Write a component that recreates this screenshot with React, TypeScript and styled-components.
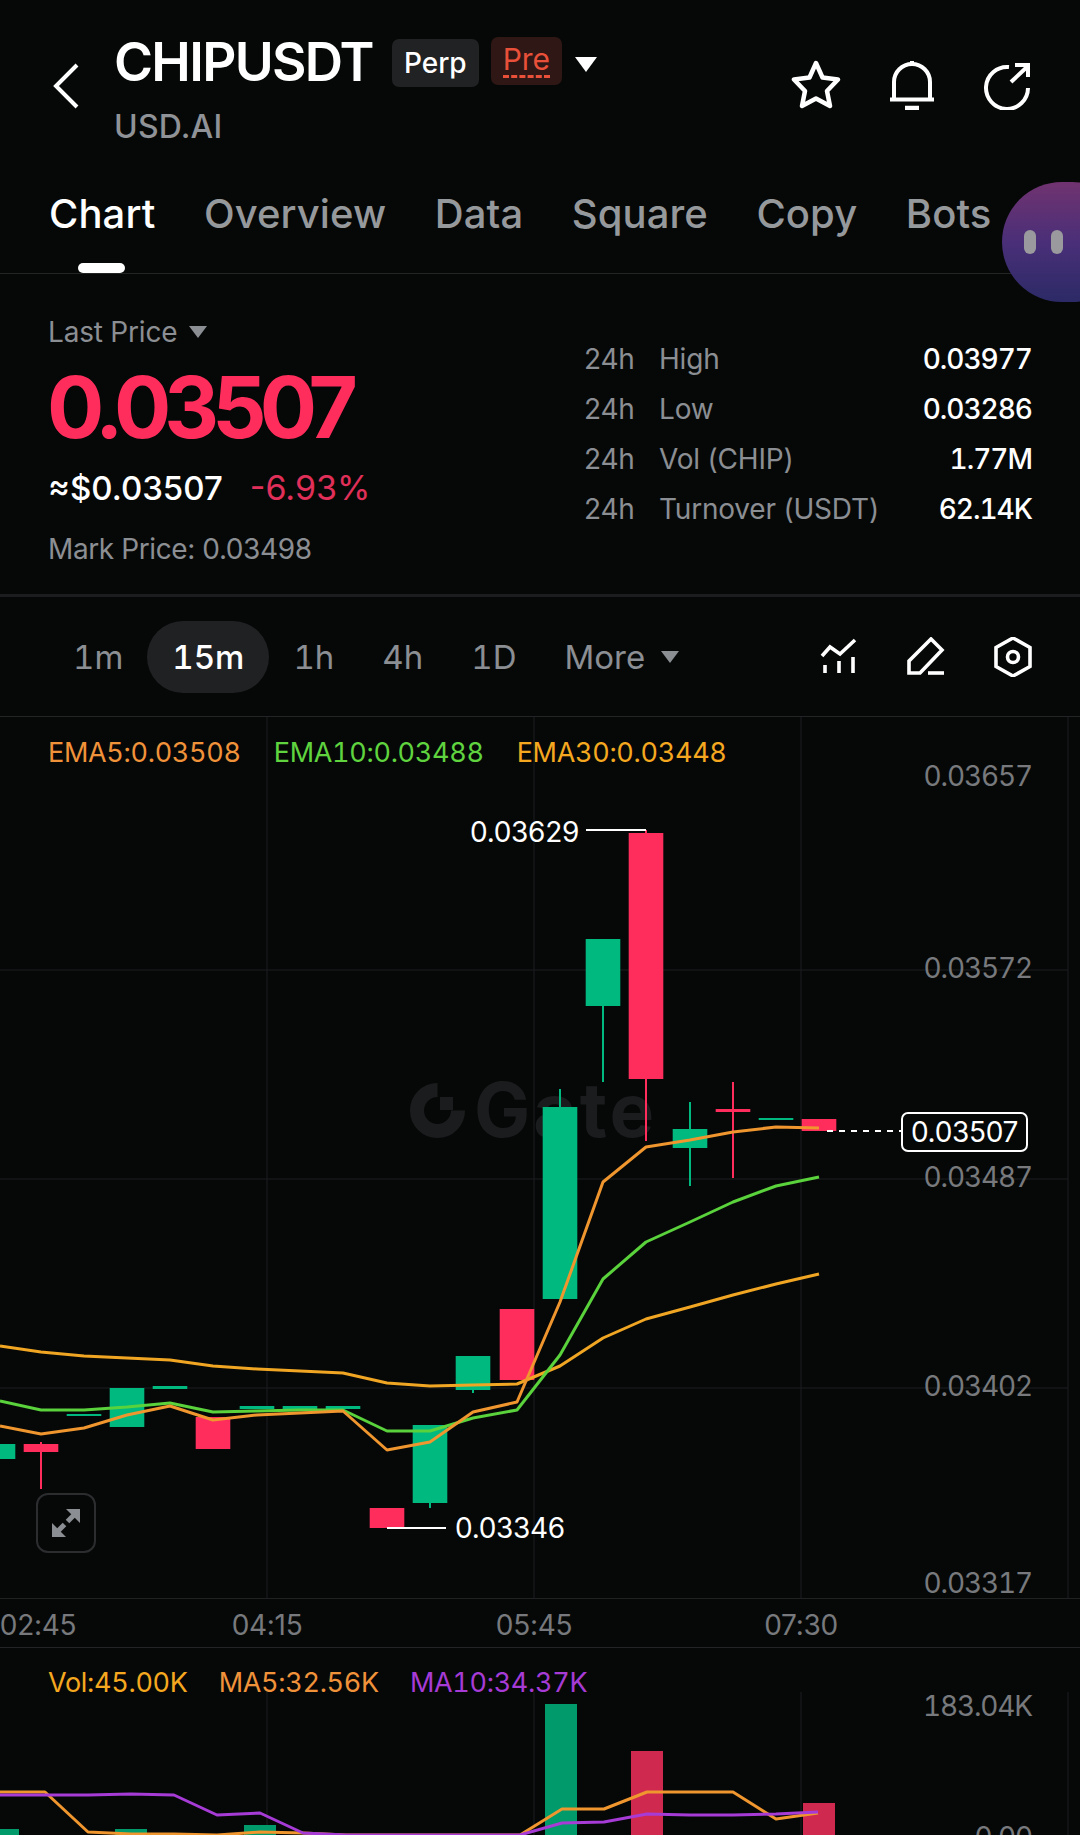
import React from 'react';
import styled, { createGlobalStyle } from 'styled-components';

const GlobalStyle = createGlobalStyle`
  html, body {
    margin: 0;
    padding: 0;
    background: #060808;
  }
  * {
    box-sizing: border-box;
  }
`;

const Page = styled.div`
  position: relative;
  width: 1080px;
  height: 1835px;
  overflow: hidden;
  background: #060808;
  color: #fff;
  font-family: Inter, 'Liberation Sans', sans-serif;
`;

const Header = styled.header`
  display: flex;
  align-items: flex-start;
  height: 150px;
  padding: 32px 47px 0 53px;
`;

const BackButton = styled.svg`
  width: 26px;
  height: 46px;
  margin-top: 31px;
  margin-right: 35px;
  flex: none;
`;

const TitleBlock = styled.div`
  flex: 1;
`;

const TitleRow = styled.div`
  display: flex;
  align-items: flex-start;
`;

const Title = styled.h1`
  margin: 2px 0 0;
  font-size: 53px;
  line-height: 56px;
  font-weight: 600;
  letter-spacing: -1.7px;
`;

const Badge = styled.span<{ $pre?: boolean }>`
  display: flex;
  align-items: center;
  justify-content: center;
  height: 48px;
  margin-top: ${({ $pre }) => ($pre ? '5px' : '7px')};
  margin-left: ${({ $pre }) => ($pre ? '12px' : '19px')};
  padding: 0 12px;
  border-radius: 7px;
  font-size: 28px;
  font-weight: ${({ $pre }) => ($pre ? 400 : 500)};
  background: ${({ $pre }) => ($pre ? '#2e1714' : '#202223')};
  color: ${({ $pre }) => ($pre ? '#e8503a' : '#fff')};
`;

const PreText = styled.span`
  padding-bottom: 1px;
  border-bottom: 3px dashed #e8503a;
  font-size: 30px;
  line-height: 30px;
`;

const Caret = styled.i<{ $size: number; $color: string }>`
  display: inline-block;
  flex: none;
  width: 0;
  height: 0;
  border-left: ${({ $size }) => $size}px solid transparent;
  border-right: ${({ $size }) => $size}px solid transparent;
  border-top: ${({ $size }) => $size * 1.4}px solid ${({ $color }) => $color};
`;

const TitleCaret = styled(Caret)`
  margin: 25px 0 0 13px;
`;

const Subtitle = styled.div`
  margin-top: 18px;
  font-size: 32px;
  line-height: 38px;
  font-weight: 500;
  letter-spacing: 0.2px;
  color: #8f9296;
`;

const HeaderIcons = styled.div`
  display: flex;
  gap: 46px;
  margin-top: 28px;
`;

const IconSvg = styled.svg<{ $size: number }>`
  display: block;
  width: ${({ $size }) => $size}px;
  height: ${({ $size }) => $size}px;
  flex: none;
`;

const Tabs = styled.nav`
  display: flex;
  gap: 48.5px;
  height: 124px;
  padding: 41px 0 0 49px;
  border-bottom: 1px solid #222426;
`;

const Tab = styled.span<{ $active?: boolean }>`
  position: relative;
  height: 82px;
  font-size: 40px;
  line-height: 46px;
  font-weight: 500;
  letter-spacing: 0.1px;
  color: ${({ $active }) => ($active ? '#fff' : '#96999c')};

  ${({ $active }) =>
    $active &&
    `
    &::after {
      content: '';
      position: absolute;
      left: 29px;
      top: 72px;
      width: 47px;
      height: 10px;
      border-radius: 5px;
      background: #fff;
    }
  `}
`;

const FloatBubble = styled.div`
  position: absolute;
  left: 1002px;
  top: 182px;
  width: 130px;
  height: 120px;
  display: flex;
  align-items: center;
  gap: 15px;
  padding-left: 22px;
  border-radius: 60px;
  background: linear-gradient(180deg, #703370 0%, #4a2f78 50%, #2c2a66 100%);
`;

const BubbleBar = styled.span`
  width: 12px;
  height: 24px;
  border-radius: 6px;
  background: #9a9a9e;
`;

const PriceSection = styled.section`
  display: flex;
  justify-content: space-between;
  height: 323px;
  padding: 0 48px;
  border-bottom: 3px solid #1b1d1f;
`;

const PriceLeft = styled.div`
  padding-top: 41px;
`;

const LastPrice = styled.div`
  display: flex;
  align-items: center;
  gap: 12px;
  font-size: 28px;
  line-height: 34px;
  letter-spacing: -0.2px;
  color: #8b8e92;
`;

const BigPrice = styled.div`
  margin: 14px 0 0 -1px;
  font-size: 85px;
  line-height: 90px;
  font-weight: 700;
  letter-spacing: -6.9px;
  color: #ff2d5c;
`;

const ChangeRow = styled.div`
  display: flex;
  gap: 27px;
  margin-top: 15px;
  font-size: 33px;
  line-height: 40px;
  font-weight: 500;
`;

const Change = styled.span`
  font-size: 34px;
  font-weight: 400;
  color: #e02f58;
`;

const MarkPrice = styled.div`
  margin-top: 24px;
  font-size: 28px;
  line-height: 34px;
  letter-spacing: -0.4px;
  color: #8b8e92;
`;

const Stats = styled.div`
  display: grid;
  grid-template-columns: 75px 1fr auto;
  grid-auto-rows: 50px;
  width: 448px;
  padding-top: 60px;
  font-size: 28px;
  letter-spacing: -0.2px;
  align-items: center;
  color: #8b8e92;
`;

const StatValue = styled.span`
  font-weight: 500;
  font-variant-numeric: tabular-nums;
  letter-spacing: -1px;
  color: #fff;
  text-align: right;
`;

const TimeBar = styled.div`
  display: flex;
  align-items: center;
  height: 120px;
  padding: 0 47px 0 49px;
  border-bottom: 1px solid #222426;
`;

const TimeItem = styled.span<{ $active?: boolean }>`
  display: flex;
  align-items: center;
  gap: 16px;
  height: 72px;
  padding: 0 ${({ $active }) => ($active ? '25px' : '24px')};
  border-radius: 36px;
  font-size: 33px;
  font-variant-numeric: tabular-nums;
  font-weight: ${({ $active }) => ($active ? 500 : 400)};
  background: ${({ $active }) => ($active ? '#1f2122' : 'transparent')};
  color: ${({ $active }) => ($active ? '#fff' : '#8b8e92')};
`;

const TimeIcons = styled.div`
  display: flex;
  gap: 47px;
  margin-left: auto;
`;

const ChartPanel = styled.div`
  position: relative;
  height: 881px;
`;

const VolumePanel = styled.div`
  position: relative;
  height: 187px;
`;

const DrawLayer = styled.svg`
  position: absolute;
  left: 0;
  top: 0;
  width: 100%;
  height: 100%;
`;

const Legend = styled.div`
  position: relative;
  display: flex;
  gap: 33px;
  padding: 20px 0 0 48px;
  font-size: 27px;
  line-height: 32px;
  font-variant-numeric: tabular-nums;
  letter-spacing: -0.3px;
`;

const VolumeLegend = styled(Legend)`
  gap: 31px;
  padding-top: 19px;
`;

const LegendItem = styled.span<{ $color: string }>`
  color: ${({ $color }) => $color};
`;

const AxisLabel = styled.span<{ $top: number }>`
  position: absolute;
  right: 48px;
  top: ${({ $top }) => $top}px;
  font-size: 28px;
  line-height: 34px;
  font-variant-numeric: tabular-nums;
  letter-spacing: -1.15px;
  color: #77797c;
`;

const Marker = styled.span<{ $left: number; $top: number }>`
  position: absolute;
  left: ${({ $left }) => $left}px;
  top: ${({ $top }) => $top}px;
  font-size: 28px;
  line-height: 34px;
  letter-spacing: -0.3px;
  color: #fff;
`;

const LastBox = styled.span`
  position: absolute;
  left: 901px;
  top: 395px;
  width: 127px;
  height: 40px;
  display: flex;
  align-items: center;
  justify-content: center;
  border: 2px solid #fff;
  border-radius: 7px;
  font-size: 28px;
  letter-spacing: -0.3px;
  background: #060808;
`;

const Watermark = styled.div`
  position: absolute;
  left: 410px;
  top: 365px;
  display: flex;
  align-items: center;
  gap: 9px;
  font-size: 75px;
  line-height: 56px;
  font-weight: 700;
  letter-spacing: 3px;
  color: #1a1c1d;
`;

const ExpandButton = styled.div`
  position: absolute;
  left: 36px;
  top: 776px;
  width: 60px;
  height: 60px;
  display: flex;
  align-items: center;
  justify-content: center;
  border: 2px solid #2b2d2f;
  border-radius: 12px;
`;

const TimeAxis = styled.div`
  position: relative;
  height: 50px;
  border-top: 1px solid #1f2123;
  border-bottom: 1px solid #222426;
  font-size: 28px;
  letter-spacing: -0.3px;
  color: #77797c;
`;

const TimeLabel = styled.span<{ $center: number }>`
  position: absolute;
  left: ${({ $center }) => $center}px;
  top: 9px;
  line-height: 34px;
  transform: translateX(-50%);
`;

type Candle = { c: number; t: number; b: number; hi?: number; lo?: number; up: boolean };

const UP = '#00b97e';
const DOWN = '#ff2d5c';

const candles: Candle[] = [
  { c: -2, t: 1444, b: 1459, up: true },
  { c: 41, t: 1444, b: 1452, hi: 1442, lo: 1489, up: false },
  { c: 84, t: 1414, b: 1416, up: true },
  { c: 127, t: 1388, b: 1427, up: true },
  { c: 170, t: 1386, b: 1389, up: true },
  { c: 213, t: 1417, b: 1449, up: false },
  { c: 257, t: 1406, b: 1409, up: true },
  { c: 300, t: 1406, b: 1409, up: true },
  { c: 343, t: 1406, b: 1409, up: true },
  { c: 387, t: 1508, b: 1528, up: false },
  { c: 430, t: 1425, b: 1503, lo: 1508, up: true },
  { c: 473, t: 1356, b: 1390, lo: 1393, up: true },
  { c: 517, t: 1309, b: 1380, up: false },
  { c: 560, t: 1107, b: 1299, hi: 1089, up: true },
  { c: 603, t: 939, b: 1006, lo: 1082, up: true },
  { c: 646, t: 833, b: 1079, hi: 830, lo: 1141, up: false },
  { c: 690, t: 1129, b: 1148, hi: 1102, lo: 1186, up: true },
  { c: 733, t: 1109, b: 1112, hi: 1082, lo: 1178, up: false },
  { c: 776, t: 1118, b: 1120, up: true },
  { c: 819, t: 1119, b: 1131, up: false },
];

const xs = [0, 41, 84, 127, 170, 213, 257, 300, 343, 387, 430, 473, 517, 560, 603, 646, 690, 733, 776, 819];

const ema5 = [1426, 1434, 1428, 1415, 1406, 1420, 1415, 1413, 1411, 1450, 1442, 1412, 1402, 1302, 1182, 1147, 1140, 1132, 1127, 1128];
const ema10 = [1401, 1410, 1410, 1407, 1403, 1412, 1411, 1410, 1410, 1431, 1431, 1418, 1410, 1355, 1279, 1242, 1222, 1202, 1186, 1177];
const ema30 = [1346, 1352, 1356, 1358, 1360, 1366, 1369, 1371, 1373, 1383, 1386, 1385, 1384, 1366, 1338, 1319, 1307, 1295, 1284, 1274];

const volXs = [0, 45, 88, 131, 174, 217, 260, 303, 346, 520, 562, 604, 647, 690, 733, 776, 818];
const volMa5 = [1792, 1792, 1832, 1834, 1834, 1835, 1832, 1833, 1835, 1835, 1809, 1809, 1792, 1792, 1792, 1819, 1813];
const volMa10 = [1795, 1795, 1795, 1794, 1795, 1815, 1813, 1833, 1835, 1835, 1823, 1822, 1814, 1815, 1815, 1814, 1812];

const volBars = [
  { x: 0, w: 19, t: 1829, color: '#019a6a' },
  { x: 115, w: 32, t: 1829, color: '#019a6a' },
  { x: 244, w: 32, t: 1825, color: '#019a6a' },
  { x: 545, w: 32, t: 1704, color: '#019a6a' },
  { x: 631, w: 32, t: 1751, color: '#d0294f' },
  { x: 803, w: 32, t: 1803, color: '#d0294f' },
];

const toPoints = (x: number[], y: number[]) => x.map((v, i) => `${v},${y[i]}`).join(' ');

const stats = [
  ['High', '0.03977'],
  ['Low', '0.03286'],
  ['Vol (CHIP)', '1.77M'],
  ['Turnover (USDT)', '62.14K'],
];

const StatRows = () => (
  <Stats>
    {stats.map(([label, value]) => (
      <React.Fragment key={label}>
        <span>24h</span>
        <span>{label}</span>
        <StatValue>{value}</StatValue>
      </React.Fragment>
    ))}
  </Stats>
);

const CandleChart = () => (
  <DrawLayer viewBox="0 717 1080 881">
    {[970, 1179, 1388].map((y) => (
      <line key={y} x1={0} x2={1068} y1={y} y2={y} stroke="#1a1c1e" strokeWidth={1} />
    ))}
    {[267, 534, 801, 1068].map((x) => (
      <line key={x} x1={x} x2={x} y1={717} y2={1598} stroke="#1a1c1e" strokeWidth={1} />
    ))}
    {candles.map((k) => {
      const color = k.up ? UP : DOWN;
      return (
        <g key={k.c}>
          {(k.hi || k.lo) && (
            <line x1={k.c} x2={k.c} y1={k.hi ?? k.t} y2={k.lo ?? k.b} stroke={color} strokeWidth={2} />
          )}
          <rect x={k.c - 17.3} y={k.t} width={34.6} height={k.b - k.t} fill={color} />
        </g>
      );
    })}
    <polyline points={toPoints(xs, ema30)} fill="none" stroke="#f0a623" strokeWidth={3} strokeLinejoin="round" />
    <polyline points={toPoints(xs, ema10)} fill="none" stroke="#5ad23c" strokeWidth={3} strokeLinejoin="round" />
    <polyline points={toPoints(xs, ema5)} fill="none" stroke="#f0962e" strokeWidth={3} strokeLinejoin="round" />
    <line x1={586} x2={646} y1={830} y2={830} stroke="#fff" strokeWidth={2} />
    <line x1={387} x2={446} y1={1528} y2={1528} stroke="#fff" strokeWidth={2} />
    <line x1={827} x2={901} y1={1131} y2={1131} stroke="#fff" strokeWidth={2} strokeDasharray="6 6" />
  </DrawLayer>
);

const VolumeChart = () => (
  <DrawLayer viewBox="0 1648 1080 187">
    {[267, 534, 801, 1068].map((x) => (
      <line key={x} x1={x} x2={x} y1={1692} y2={1835} stroke="#1a1c1e" strokeWidth={1} />
    ))}
    {volBars.map((b) => (
      <rect key={b.x} x={b.x} y={b.t} width={b.w} height={1835 - b.t} fill={b.color} />
    ))}
    <polyline points={toPoints(volXs, volMa5)} fill="none" stroke="#f0962e" strokeWidth={3} strokeLinejoin="round" />
    <polyline points={toPoints(volXs, volMa10)} fill="none" stroke="#a63bd6" strokeWidth={3} strokeLinejoin="round" />
  </DrawLayer>
);

export default function App() {
  return (
    <Page>
      <GlobalStyle />
      <Header>
        <BackButton viewBox="0 0 26 46" fill="none" stroke="#fff" strokeWidth={4}>
          <polyline points="24,2 3,23 24,44" />
        </BackButton>
        <TitleBlock>
          <TitleRow>
            <Title>CHIPUSDT</Title>
            <Badge>Perp</Badge>
            <Badge $pre>
              <PreText>Pre</PreText>
            </Badge>
            <TitleCaret $size={11} $color="#fff" />
          </TitleRow>
          <Subtitle>USD.AI</Subtitle>
        </TitleBlock>
        <HeaderIcons>
          <IconSvg $size={50} viewBox="0 0 50 50" fill="none" stroke="#fff" strokeWidth={4.5} strokeLinejoin="round">
            <polygon points="25,3 31.5,17.5 47,19.5 36,31 39,46 25,38.5 11,46 14,31 3,19.5 18.5,17.5" />
          </IconSvg>
          <IconSvg $size={50} viewBox="0 0 50 50" fill="none" stroke="#fff" strokeWidth={4}>
            <path d="M7 39 V22 a18 18 0 0 1 36 0 V39" />
            <path d="M25 1 V5" />
            <path d="M3 39.5 H47" />
            <path d="M18 48 H32" strokeWidth={4.5} />
          </IconSvg>
          <IconSvg $size={50} viewBox="0 0 50 50" fill="none" stroke="#fff" strokeWidth={4}>
            <path d="M26 7 A21 21 0 1 0 45 28" />
            <path d="M28 22 L44 7" />
            <path d="M32 5 H45 V17" />
          </IconSvg>
        </HeaderIcons>
      </Header>

      <Tabs>
        <Tab $active>Chart</Tab>
        <Tab>Overview</Tab>
        <Tab>Data</Tab>
        <Tab>Square</Tab>
        <Tab>Copy</Tab>
        <Tab>Bots</Tab>
      </Tabs>

      <FloatBubble>
        <BubbleBar />
        <BubbleBar />
      </FloatBubble>

      <PriceSection>
        <PriceLeft>
          <LastPrice>
            Last Price
            <Caret $size={9} $color="#8b8e92" />
          </LastPrice>
          <BigPrice>0.03507</BigPrice>
          <ChangeRow>
            <span>≈$0.03507</span>
            <Change>-6.93%</Change>
          </ChangeRow>
          <MarkPrice>Mark Price: 0.03498</MarkPrice>
        </PriceLeft>
        <StatRows />
      </PriceSection>

      <TimeBar>
        <TimeItem>1m</TimeItem>
        <TimeItem $active>15m</TimeItem>
        <TimeItem>1h</TimeItem>
        <TimeItem>4h</TimeItem>
        <TimeItem>1D</TimeItem>
        <TimeItem>
          More
          <Caret $size={9} $color="#8b8e92" />
        </TimeItem>
        <TimeIcons>
          <IconSvg $size={40} viewBox="0 0 40 40" fill="none" stroke="#fff" strokeWidth={3.6}>
            <polyline points="3,19 11,10 21,17 36,3" />
            <path d="M6 28 V36 M20 24 V36 M34 20 V36" />
          </IconSvg>
          <IconSvg $size={40} viewBox="0 0 40 40" fill="none" stroke="#fff" strokeWidth={3.6}>
            <path d="M3 24 L25 2 L36 13 L14 36 H3 Z" />
            <path d="M22 36 H38" />
          </IconSvg>
          <IconSvg $size={40} viewBox="0 0 40 40" fill="none" stroke="#fff" strokeWidth={3.6}>
            <polygon points="20,1 37,10.5 37,29.5 20,39 3,29.5 3,10.5" />
            <circle cx={20} cy={20} r={5.5} />
          </IconSvg>
        </TimeIcons>
      </TimeBar>

      <ChartPanel>
        <Watermark>
          <IconSvg $size={55} viewBox="0 0 55 55">
            <path d="M27.5 7 A20.5 20.5 0 1 0 48 27.5" fill="none" stroke="#1a1c1d" strokeWidth={14} />
            <rect x={30} y={14} width={13} height={13} fill="#1a1c1d" />
          </IconSvg>
          Gate
        </Watermark>
        <CandleChart />
        <Legend>
          <LegendItem $color="#f0923a">EMA5:0.03508</LegendItem>
          <LegendItem $color="#5fd43f">EMA10:0.03488</LegendItem>
          <LegendItem $color="#f5a81f">EMA30:0.03448</LegendItem>
        </Legend>
        <AxisLabel $top={42}>0.03657</AxisLabel>
        <AxisLabel $top={234}>0.03572</AxisLabel>
        <AxisLabel $top={443}>0.03487</AxisLabel>
        <AxisLabel $top={652}>0.03402</AxisLabel>
        <AxisLabel $top={849}>0.03317</AxisLabel>
        <Marker $left={470} $top={98}>0.03629</Marker>
        <Marker $left={455} $top={794}>0.03346</Marker>
        <LastBox>0.03507</LastBox>
        <ExpandButton>
          <IconSvg $size={28} viewBox="0 0 28 28" fill="#8b8e92" stroke="none">
            <polygon points="14,0 28,0 28,14" />
            <polygon points="0,28 0,14 14,28" />
            <path d="M22 6 L15.5 12.5 M6 22 L12.5 15.5" stroke="#8b8e92" strokeWidth={5} />
          </IconSvg>
        </ExpandButton>
      </ChartPanel>

      <TimeAxis>
        <TimeLabel $center={38}>02:45</TimeLabel>
        <TimeLabel $center={267}>04:15</TimeLabel>
        <TimeLabel $center={534}>05:45</TimeLabel>
        <TimeLabel $center={801}>07:30</TimeLabel>
      </TimeAxis>

      <VolumePanel>
        <VolumeChart />
        <VolumeLegend>
          <LegendItem $color="#f5a81f">Vol:45.00K</LegendItem>
          <LegendItem $color="#f0923a">MA5:32.56K</LegendItem>
          <LegendItem $color="#a63bd6">MA10:34.37K</LegendItem>
        </VolumeLegend>
        <AxisLabel $top={41}>183.04K</AxisLabel>
        <AxisLabel $top={172}>0.00</AxisLabel>
      </VolumePanel>
    </Page>
  );
}
